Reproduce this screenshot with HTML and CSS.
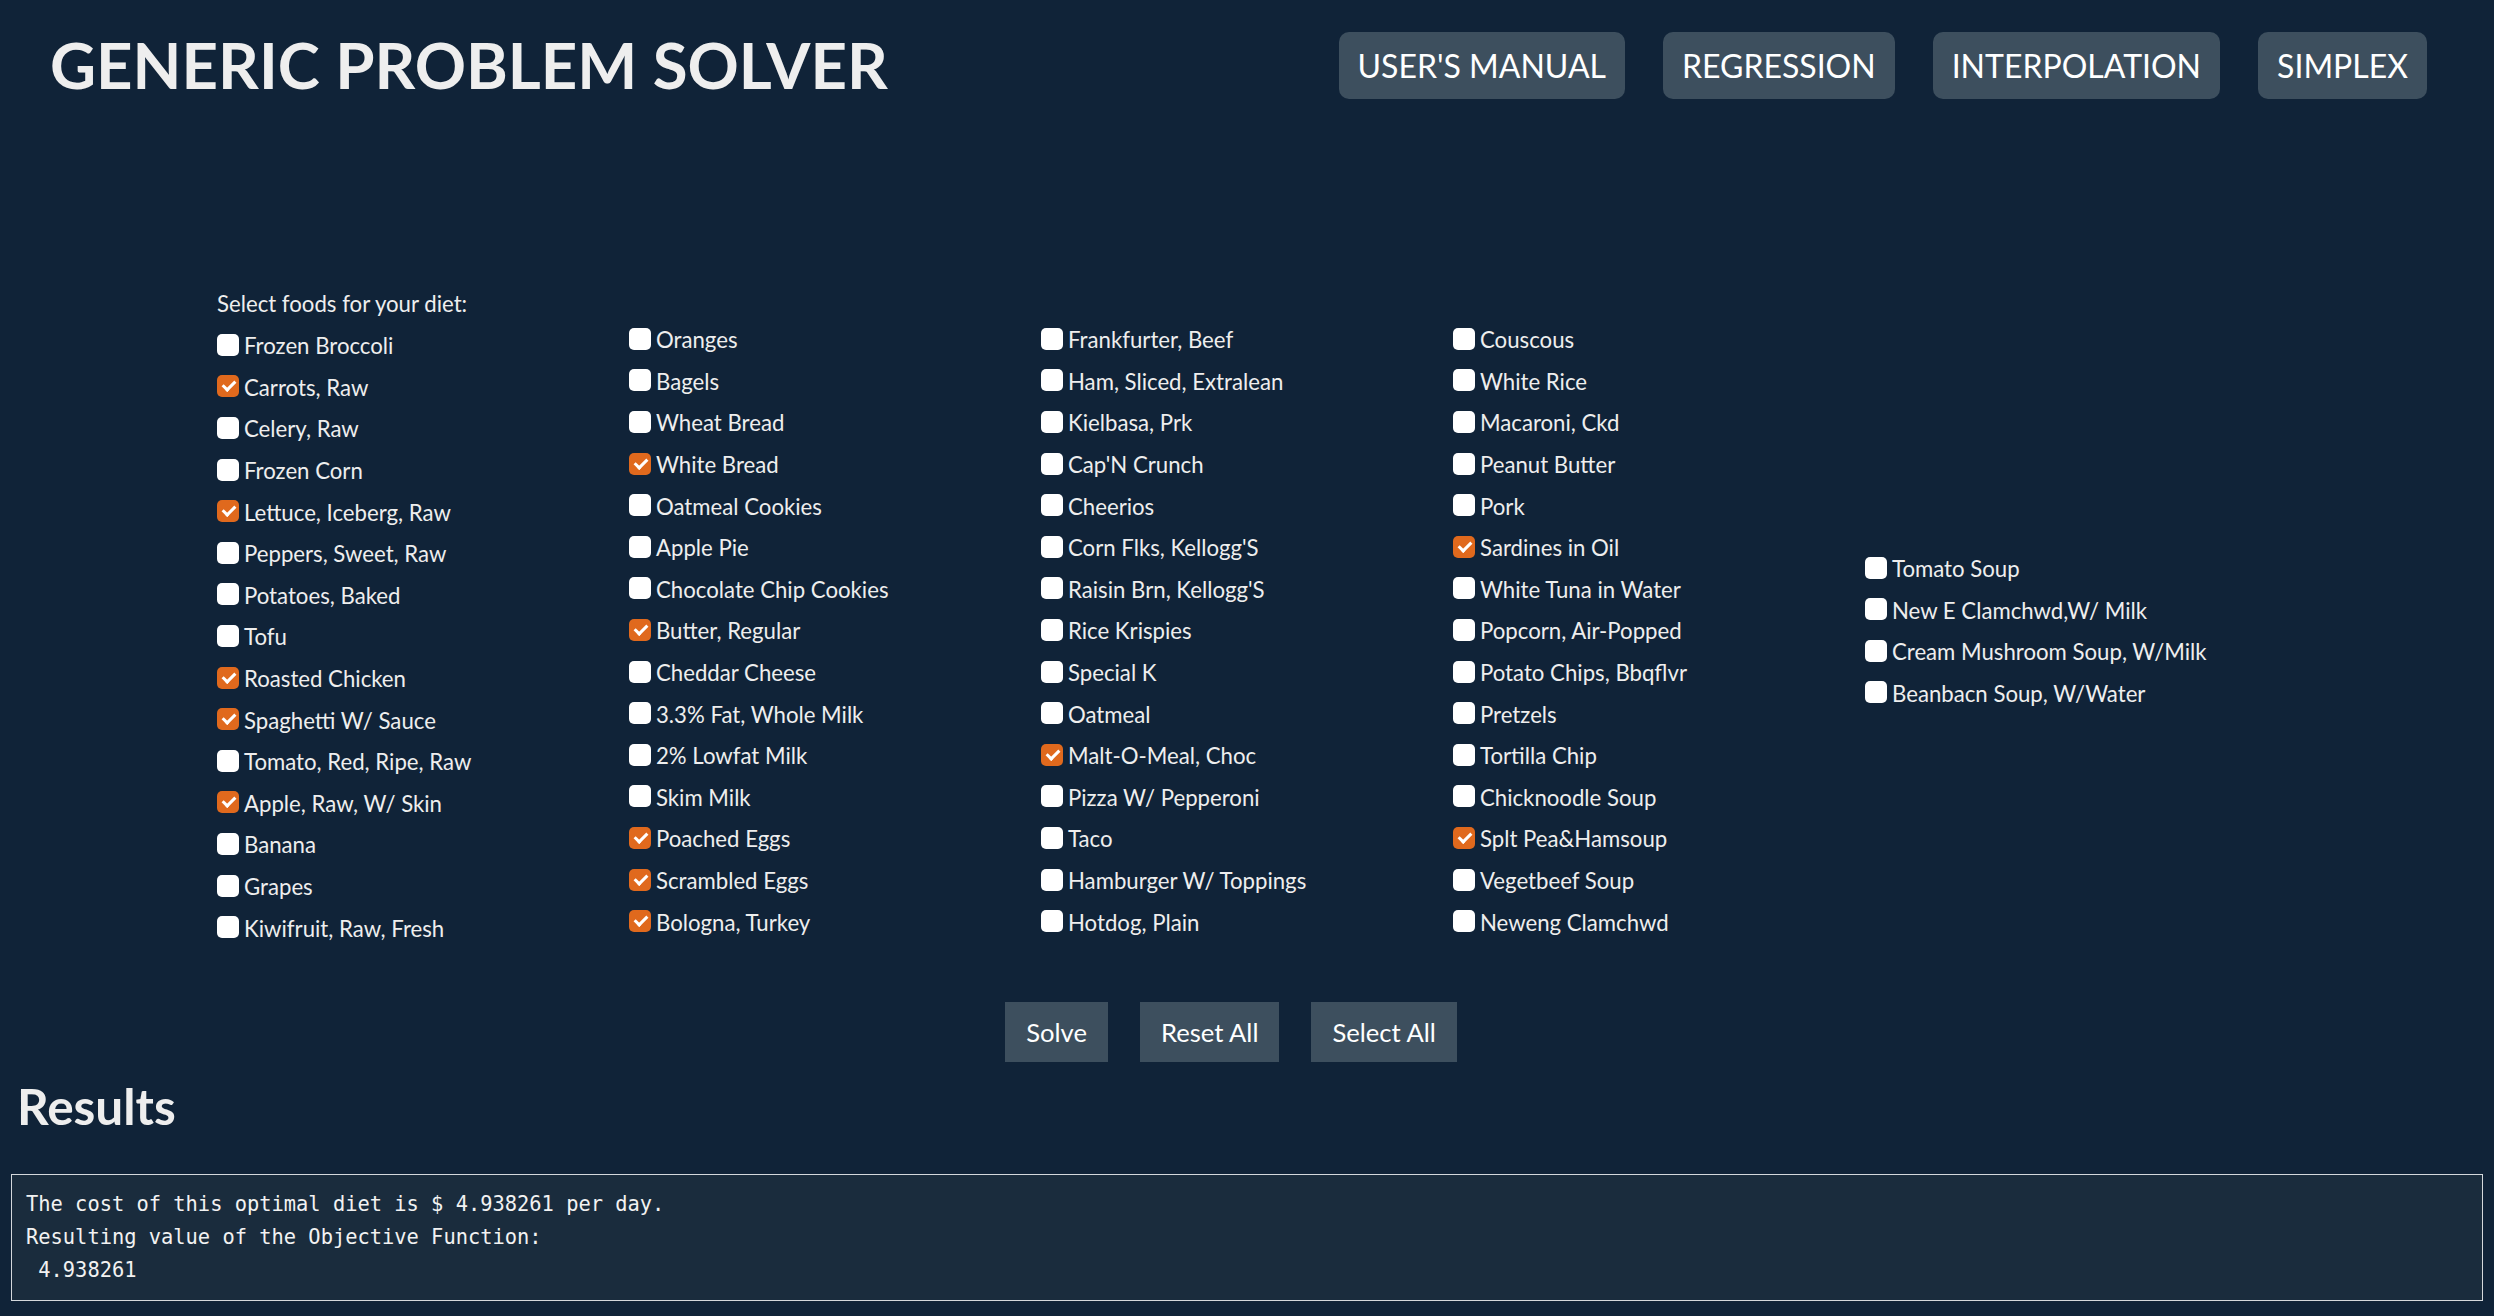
FILE: index.html
```html
<!DOCTYPE html>
<html lang="en">
<head>
<meta charset="utf-8">
<title>Generic Problem Solver</title>
<link rel="stylesheet" href="styles.css">
</head>
<body>
<header class="topbar">
  <h1 class="title">GENERIC PROBLEM SOLVER</h1>
  <nav class="nav">
    <button class="nav-btn">USER'S MANUAL</button>
    <button class="nav-btn">REGRESSION</button>
    <button class="nav-btn">INTERPOLATION</button>
    <button class="nav-btn">SIMPLEX</button>
  </nav>
</header>

<main>
  <form class="foods">
    <div class="col">
      <div class="prompt">Select foods for your diet:</div>
      <label class="item"><input type="checkbox"><span>Frozen Broccoli</span></label>
      <label class="item"><input type="checkbox" checked><span>Carrots, Raw</span></label>
      <label class="item"><input type="checkbox"><span>Celery, Raw</span></label>
      <label class="item"><input type="checkbox"><span>Frozen Corn</span></label>
      <label class="item"><input type="checkbox" checked><span>Lettuce, Iceberg, Raw</span></label>
      <label class="item"><input type="checkbox"><span>Peppers, Sweet, Raw</span></label>
      <label class="item"><input type="checkbox"><span>Potatoes, Baked</span></label>
      <label class="item"><input type="checkbox"><span>Tofu</span></label>
      <label class="item"><input type="checkbox" checked><span>Roasted Chicken</span></label>
      <label class="item"><input type="checkbox" checked><span>Spaghetti W/ Sauce</span></label>
      <label class="item"><input type="checkbox"><span>Tomato, Red, Ripe, Raw</span></label>
      <label class="item"><input type="checkbox" checked><span>Apple, Raw, W/ Skin</span></label>
      <label class="item"><input type="checkbox"><span>Banana</span></label>
      <label class="item"><input type="checkbox"><span>Grapes</span></label>
      <label class="item"><input type="checkbox"><span>Kiwifruit, Raw, Fresh</span></label>
    </div>
    <div class="col">
      <label class="item"><input type="checkbox"><span>Oranges</span></label>
      <label class="item"><input type="checkbox"><span>Bagels</span></label>
      <label class="item"><input type="checkbox"><span>Wheat Bread</span></label>
      <label class="item"><input type="checkbox" checked><span>White Bread</span></label>
      <label class="item"><input type="checkbox"><span>Oatmeal Cookies</span></label>
      <label class="item"><input type="checkbox"><span>Apple Pie</span></label>
      <label class="item"><input type="checkbox"><span>Chocolate Chip Cookies</span></label>
      <label class="item"><input type="checkbox" checked><span>Butter, Regular</span></label>
      <label class="item"><input type="checkbox"><span>Cheddar Cheese</span></label>
      <label class="item"><input type="checkbox"><span>3.3% Fat, Whole Milk</span></label>
      <label class="item"><input type="checkbox"><span>2% Lowfat Milk</span></label>
      <label class="item"><input type="checkbox"><span>Skim Milk</span></label>
      <label class="item"><input type="checkbox" checked><span>Poached Eggs</span></label>
      <label class="item"><input type="checkbox" checked><span>Scrambled Eggs</span></label>
      <label class="item"><input type="checkbox" checked><span>Bologna, Turkey</span></label>
    </div>
    <div class="col">
      <label class="item"><input type="checkbox"><span>Frankfurter, Beef</span></label>
      <label class="item"><input type="checkbox"><span>Ham, Sliced, Extralean</span></label>
      <label class="item"><input type="checkbox"><span>Kielbasa, Prk</span></label>
      <label class="item"><input type="checkbox"><span>Cap'N Crunch</span></label>
      <label class="item"><input type="checkbox"><span>Cheerios</span></label>
      <label class="item"><input type="checkbox"><span>Corn Flks, Kellogg'S</span></label>
      <label class="item"><input type="checkbox"><span>Raisin Brn, Kellogg'S</span></label>
      <label class="item"><input type="checkbox"><span>Rice Krispies</span></label>
      <label class="item"><input type="checkbox"><span>Special K</span></label>
      <label class="item"><input type="checkbox"><span>Oatmeal</span></label>
      <label class="item"><input type="checkbox" checked><span>Malt-O-Meal, Choc</span></label>
      <label class="item"><input type="checkbox"><span>Pizza W/ Pepperoni</span></label>
      <label class="item"><input type="checkbox"><span>Taco</span></label>
      <label class="item"><input type="checkbox"><span>Hamburger W/ Toppings</span></label>
      <label class="item"><input type="checkbox"><span>Hotdog, Plain</span></label>
    </div>
    <div class="col">
      <label class="item"><input type="checkbox"><span>Couscous</span></label>
      <label class="item"><input type="checkbox"><span>White Rice</span></label>
      <label class="item"><input type="checkbox"><span>Macaroni, Ckd</span></label>
      <label class="item"><input type="checkbox"><span>Peanut Butter</span></label>
      <label class="item"><input type="checkbox"><span>Pork</span></label>
      <label class="item"><input type="checkbox" checked><span>Sardines in Oil</span></label>
      <label class="item"><input type="checkbox"><span>White Tuna in Water</span></label>
      <label class="item"><input type="checkbox"><span>Popcorn, Air-Popped</span></label>
      <label class="item"><input type="checkbox"><span>Potato Chips, Bbqflvr</span></label>
      <label class="item"><input type="checkbox"><span>Pretzels</span></label>
      <label class="item"><input type="checkbox"><span>Tortilla Chip</span></label>
      <label class="item"><input type="checkbox"><span>Chicknoodle Soup</span></label>
      <label class="item"><input type="checkbox" checked><span>Splt Pea&amp;Hamsoup</span></label>
      <label class="item"><input type="checkbox"><span>Vegetbeef Soup</span></label>
      <label class="item"><input type="checkbox"><span>Neweng Clamchwd</span></label>
    </div>
    <div class="col">
      <label class="item"><input type="checkbox"><span>Tomato Soup</span></label>
      <label class="item"><input type="checkbox"><span>New E Clamchwd,W/ Milk</span></label>
      <label class="item"><input type="checkbox"><span>Cream Mushroom Soup, W/Milk</span></label>
      <label class="item"><input type="checkbox"><span>Beanbacn Soup, W/Water</span></label>
    </div>
  </form>

  <div class="actions">
    <button class="act-btn">Solve</button>
    <button class="act-btn">Reset All</button>
    <button class="act-btn">Select All</button>
  </div>

  <h2 class="results-title">Results</h2>
  <pre class="results">The cost of this optimal diet is $ 4.938261 per day.
Resulting value of the Objective Function:
 4.938261</pre>
</main>
</body>
</html>
```

FILE: styles.css
```css
html, body {
  margin: 0;
  padding: 0;
}

body {
  background: #102338;
  color: #eeeeee;
  font-family: Lato, "Open Sans", sans-serif;
}

.topbar {
  display: flex;
  align-items: center;
  justify-content: space-between;
  height: 130px;
  padding: 0 67px 0 50px;
}

.title {
  margin: 0;
  font-size: 63.5px;
  font-weight: 700;
  color: #eeeeee;
  line-height: 1.2;
}

.nav {
  display: flex;
  gap: 38px;
}

.nav-btn {
  font-family: Lato, sans-serif;
  font-size: 32px;
  line-height: 37px;
  color: #ffffff;
  background: #3d4f5e;
  border: none;
  border-radius: 10px;
  padding: 15px 19px;
}

.foods {
  display: grid;
  grid-template-columns: repeat(5, 412px);
  justify-content: center;
  align-items: center;
  margin-top: 182px;
}

.col {
  display: flex;
  flex-direction: column;
}

.prompt {
  font-size: 22.2px;
  line-height: 27px;
  margin: -22px 0 7px 0;
  color: #eeeeee;
}

.item {
  display: flex;
  align-items: center;
  height: 41.6px;
  font-size: 22.2px;
  line-height: 27px;
  color: #eeeeee;
  white-space: nowrap;
}

.item span {
  padding-top: 2px;
}

.item input {
  appearance: none;
  -webkit-appearance: none;
  position: relative;
  width: 22px;
  height: 22px;
  margin: 0 5px 0 0;
  border-radius: 5px;
  background: #ffffff;
  flex: none;
}

.item input:checked {
  background: #e0691d;
}

.item input:checked::after {
  content: "";
  position: absolute;
  left: 8px;
  top: 3px;
  width: 5px;
  height: 10px;
  border: solid #ffffff;
  border-width: 0 3px 3px 0;
  transform: rotate(45deg);
}

.actions {
  display: flex;
  justify-content: center;
  margin-top: 54px;
}

.act-btn {
  font-family: Lato, sans-serif;
  font-size: 25.6px;
  line-height: 30px;
  color: #ffffff;
  background: #3d4f5e;
  border: none;
  border-radius: 0;
  padding: 15px 21px;
  margin-right: 32px;
}

.results-title {
  margin: 16px 0 40px 17px;
  font-size: 49.5px;
  font-weight: 700;
  line-height: 56px;
  color: #eeeeee;
}

.results {
  margin: 0 11px;
  padding: 13px 14px;
  border: 1px solid #d4d8dc;
  background: #1a2c3d;
  color: #f2f2f2;
  font-family: "DejaVu Sans Mono", "Liberation Mono", monospace;
  font-size: 20.4px;
  line-height: 33px;
}
```
